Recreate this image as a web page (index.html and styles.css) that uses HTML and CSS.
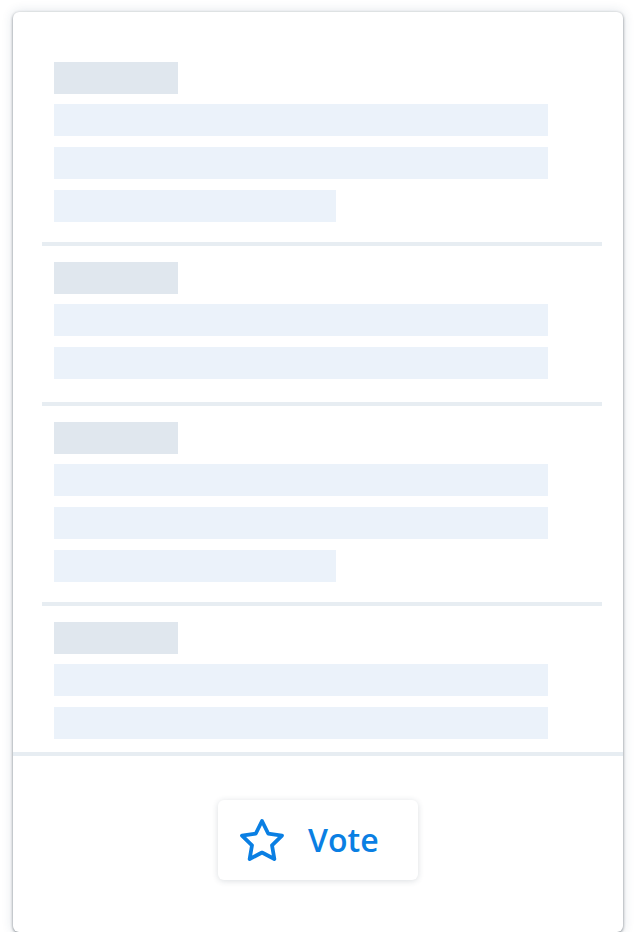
FILE: index.html
```html
<!DOCTYPE html>
<html>
<head>
<meta charset="utf-8">
<link rel="stylesheet" href="styles.css">
</head>
<body>
<div class="card">
  <div class="content">
    <div class="section">
      <div class="sk-head"></div>
      <div class="sk-line"></div>
      <div class="sk-line"></div>
      <div class="sk-line short"></div>
    </div>
    <div class="section tall-pad">
      <div class="sk-head"></div>
      <div class="sk-line"></div>
      <div class="sk-line"></div>
    </div>
    <div class="section">
      <div class="sk-head"></div>
      <div class="sk-line"></div>
      <div class="sk-line"></div>
      <div class="sk-line short"></div>
    </div>
    <div class="section last">
      <div class="sk-head"></div>
      <div class="sk-line"></div>
      <div class="sk-line"></div>
    </div>
  </div>
  <div class="footer">
    <button class="vote-btn" type="button">
      <svg class="star" width="48" height="48" viewBox="0 0 24 24" fill="none" stroke="currentColor" stroke-width="1.9" stroke-linejoin="round" stroke-linecap="round">
        <path d="M12 2l3.09 6.26L22 9.27l-5 4.87 1.18 6.88L12 17.77l-6.18 3.25L7 14.14 2 9.27l6.91-1.01L12 2z"/>
      </svg>
      <span class="vote-label">Vote</span>
    </button>
  </div>
</div>
</body>
</html>
```
FILE: styles.css
```css
* { box-sizing: border-box; }
html, body { margin: 0; padding: 0; background: #ffffff; }
body { font-family: "Open Sans", "Noto Sans", sans-serif; }

.card {
  margin: 12px 15px 0 13px;
  width: 610px;
  height: 920px;
  background: #ffffff;
  border-radius: 6px;
  box-shadow: 0 1px 3px rgba(30, 40, 50, 0.55), 0 0 12px rgba(40, 70, 100, 0.16);
  display: flex;
  flex-direction: column;
  overflow: hidden;
}

.content {
  padding: 34px 21px 0 29px;
}

.section {
  padding: 16px 12px 20px 12px;
  border-bottom: 4px solid #e7edf2;
  display: flex;
  flex-direction: column;
}
.section.tall-pad { padding-bottom: 23px; }
.section.last { padding-bottom: 13px; border-bottom: none; }

.sk-head {
  width: 124px;
  height: 32px;
  background: #e0e7ee;
  margin-bottom: 10px;
}
.sk-line {
  width: 494px;
  height: 32px;
  background: #ebf2fa;
  margin-bottom: 11px;
}
.sk-line:last-child { margin-bottom: 0; }
.sk-line.short { width: 282px; }

.footer {
  border-top: 4px solid #e7edf2;
  flex: 1;
  display: flex;
  justify-content: center;
  align-items: flex-start;
  padding-top: 44px;
}

.vote-btn {
  width: 200px;
  height: 80px;
  border: none;
  background: #ffffff;
  border-radius: 6px;
  box-shadow: 0 1px 6px rgba(30, 50, 70, 0.16);
  display: flex;
  align-items: center;
  padding: 0 0 0 20px;
  color: #0a7fe3;
  cursor: pointer;
}
.star { display: block; flex: none; margin-top: 2px; }
.vote-label {
  margin-left: 22px;
  font-family: "Open Sans", "Noto Sans", sans-serif;
  font-size: 32px;
  font-weight: 600;
  color: #0a7fe3;
  line-height: 1;
}
```
